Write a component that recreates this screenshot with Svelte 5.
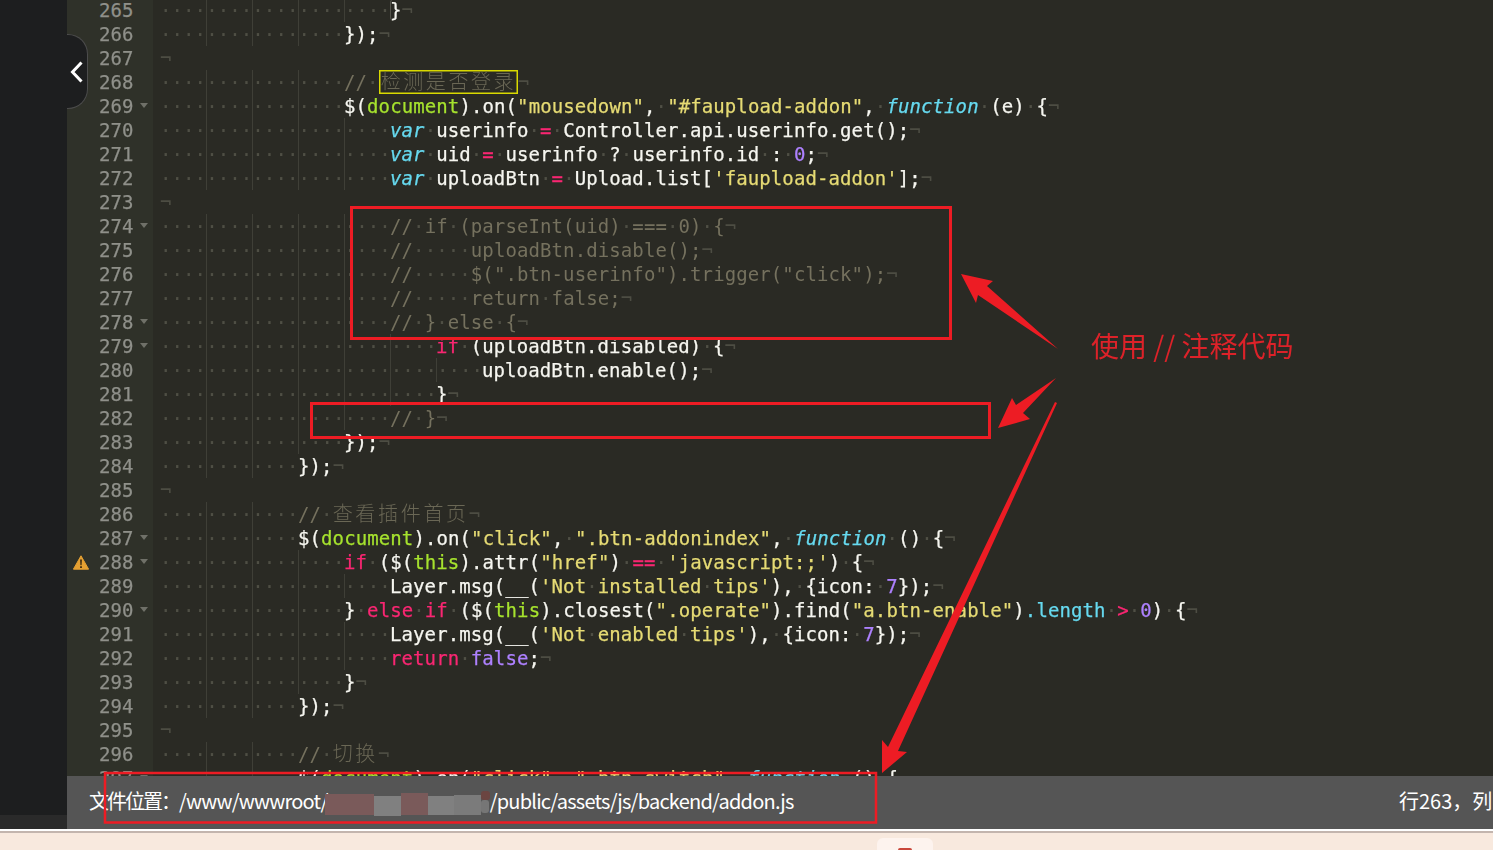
<script>
  const source = [
    [265, 20, '[b:}]'],
    [266, 16, '});'],
    [267, 0, ''],
    [268, 16, '[c://] [y:检测是否登录]'],
    [269, 16, '$([n:document]).on([s:"mousedown"], [s:"#faupload-addon"], [t:function] (e) {', 'fold'],
    [270, 20, '[t:var] userinfo [k:=] Controller.api.userinfo.get();'],
    [271, 20, '[t:var] uid [k:=] userinfo ? userinfo.id : [p:0];'],
    [272, 20, "[t:var] uploadBtn [k:=] Upload.list[[s:'faupload-addon']];"],
    [273, 0, ''],
    [274, 20, '[c://] [c:if] [c:(parseInt(uid)] [c:===] [c:0)] [c:{]', 'fold'],
    [275, 20, '[c://]     [c:uploadBtn.disable();]'],
    [276, 20, '[c://]     [c:$(".btn-userinfo").trigger("click");]'],
    [277, 20, '[c://]     [c:return] [c:false;]'],
    [278, 20, '[c://] [c:}] [c:else] [c:{]', 'fold'],
    [279, 24, '[k:if] (uploadBtn.disabled) {', 'fold'],
    [280, 28, 'uploadBtn.enable();'],
    [281, 24, '}'],
    [282, 20, '[c://] [c:}]'],
    [283, 16, '});'],
    [284, 12, '});'],
    [285, 0, ''],
    [286, 12, '[c://] [h:查看插件首页]'],
    [287, 12, '$([n:document]).on([s:"click"], [s:".btn-addonindex"], [t:function] () {', 'fold'],
    [288, 16, "[k:if] ($([n:this]).attr([s:\"href\"]) [k:==] [s:'javascript:;']) {", 'fold', true],
    [289, 20, "Layer.msg(__([s:'Not installed tips']), {icon: [p:7]});"],
    [290, 16, '} [k:else] [k:if] ($([n:this]).closest([s:".operate"]).find([s:"a.btn-enable"])[l:.length] [k:>] [p:0]) {', 'fold'],
    [291, 20, "Layer.msg(__([s:'Not enabled tips']), {icon: [p:7]});"],
    [292, 20, '[k:return] [p:false];'],
    [293, 16, '}'],
    [294, 12, '});'],
    [295, 0, ''],
    [296, 12, '[c://] [h:切换]'],
    [297, 12, '$([n:document]).on([s:"click"], [s:".btn-switch"], [t:function] () {', 'fold']
  ];

  function tokenize(text) {
    const out = [];
    const re = /\[(\w):([^\]]*)\]/g;
    let last = 0;
    let m;
    while ((m = re.exec(text))) {
      if (m.index > last) out.push(['', text.slice(last, m.index)]);
      out.push([m[1], m[2]]);
      last = re.lastIndex;
    }
    if (last < text.length) out.push(['', text.slice(last)]);
    return out.flatMap(([cls, value]) =>
      value.split(/( )/).filter(Boolean).map((piece) =>
        piece === ' ' ? ['dot', '·'] : [cls, piece]
      )
    );
  }

  const lines = source.map(([n, indent, text, fold, warn]) => ({
    n, indent, fold, warn, tokens: tokenize(text), empty: text === ''
  }));
</script>

<div class="shot">
  <div class="window">
    <div class="strip"></div>
    <div class="editor">
      <div class="scroll">
        <div class="code">
          {#each lines as line}
            <div class="row">
              <div class="gutter">
                <span class="warn">
                  {#if line.warn}
                    <svg viewBox="0 0 16 15" width="16" height="15">
                      <path d="M8 .8 15.6 14.2H.4Z" fill="#e5a032" stroke="#e5a032" stroke-linejoin="round"/>
                      <path d="M7.1 4.6h1.8l-.3 5.6H7.4ZM7.1 11.2h1.8v1.8H7.1Z" fill="#3a2a12"/>
                    </svg>
                  {/if}
                </span>
                <span class="num">{line.n}</span>
                <span class="foldslot">{#if line.fold}<i class="fold"></i>{/if}</span>
              </div>
              <div class="text">
                {#if line.indent}<span class="lead" style="width:{line.indent * 11.5}px">{'·'.repeat(line.indent)}</span>{/if}{#each line.tokens as [cls, piece]}<span class={cls}>{piece}</span>{/each}<span class="eol">¬</span>
              </div>
            </div>
          {/each}
        </div>
      </div>
      <div class="bar">
        <span class="path"><span class="label">文件位置：</span>/www/wwwroot/<span class="redact"></span>/public/assets/js/backend/addon.js</span>
        <span class="pos">行263，列1</span>
      </div>
    </div>
  </div>
  <div class="rule"></div>
  <div class="floor"><div class="tab"><i></i></div></div>

  <button class="collapse" aria-label="收起">
    <svg viewBox="0 0 14 22" width="14" height="22">
      <path d="M11.5 1.5 2.5 11l9 9.5" fill="none" stroke="#fff" stroke-width="3"/>
    </svg>
  </button>

  <svg class="marks" viewBox="0 0 1493 850" width="1493" height="850">
    <g class="smear">
      <rect x="325" y="794" width="49" height="21" fill="#7a5a5a"/>
      <rect x="374" y="796" width="27" height="20" fill="#808080"/>
      <rect x="401" y="793" width="27" height="22" fill="#7a5a5a"/>
      <rect x="428" y="796" width="26" height="19" fill="#808080"/>
      <rect x="454" y="795" width="27" height="20" fill="#7b7b7b"/>
      <rect x="481" y="791" width="9" height="9" rx="3" fill="#6b4541"/>
      <rect x="481" y="800" width="8" height="13" rx="3" fill="#767676"/>
    </g>
    <g fill="none" stroke="#ed1c24" stroke-width="3">
      <rect x="351.5" y="207.5" width="599" height="131"/>
      <rect x="311.5" y="403.5" width="678" height="34"/>
      <rect x="105" y="773" width="771" height="49.5" stroke-width="2.5"/>
    </g>
    <g fill="#ed1c24">
      <path d="M961 274 993 281 987 286 1058 349 978 295 976 303Z"/>
      <path d="M998 428 1012 398 1016 405 1056 378 1023 413 1030 419Z"/>
      <path d="M882 773 882 740 888 747 1055 402 1057 403 898 751 907 752Z"/>
    </g>
  </svg>
  <div class="note">使用 // 注释代码</div>
</div>

<style>
  :global(body) {
    margin: 0;
    background: #f8e9de;
  }

  .shot {
    position: relative;
    width: 1493px;
    height: 850px;
    overflow: hidden;
    display: flex;
    flex-direction: column;
  }

  .window {
    display: flex;
    height: 829px;
    flex: none;
  }

  .strip {
    width: 67px;
    flex: none;
    background: linear-gradient(#1d1e1f 0 815px, #2a2a2a 815px);
  }

  .editor {
    flex: 1;
    min-width: 0;
    display: flex;
    flex-direction: column;
  }

  .scroll {
    height: 776px;
    flex: none;
    overflow: hidden;
    background: #2a2a24;
  }

  .code {
    margin-top: -2px;
    filter: blur(0.35px);
    font: 19px/24px "DejaVu Sans Mono", "Noto Sans CJK SC", monospace;
    letter-spacing: 0.1px;
    color: #f6f6f0;
    -webkit-text-stroke: 0.25px;
  }

  .row {
    display: flex;
    height: 24px;
    white-space: pre;
  }

  .gutter {
    width: 86px;
    flex: none;
    display: flex;
    align-items: center;
    background: #2f3129;
    color: #8f908a;
  }

  .warn {
    width: 32px;
    flex: none;
    display: flex;
    padding-left: 6px;
    box-sizing: border-box;
  }

  .num {
    width: 35px;
    flex: none;
  }

  .foldslot {
    width: 19px;
    flex: none;
    display: flex;
    justify-content: center;
  }

  .fold {
    width: 0;
    height: 0;
    border-left: 4px solid transparent;
    border-right: 4px solid transparent;
    border-top: 5px solid #6f7068;
    margin-top: -2px;
  }

  .text {
    padding-left: 7px;
    flex: 1;
    min-width: 0;
  }

  .lead {
    display: inline-block;
    height: 24px;
    vertical-align: top;
    overflow: hidden;
    color: #4f4f45;
    -webkit-text-stroke: 0;
    background-image:
      linear-gradient(90deg, #2a2a24 0 1px, transparent 1px),
      repeating-linear-gradient(90deg, #3f3f37 0 1px, transparent 1px 46px);
  }

  .dot { color: #4f4f45; -webkit-text-stroke: 0; }
  .eol { color: #4d4d43; -webkit-text-stroke: 0; }
  .c { color: #75715e; -webkit-text-stroke: 0; }
  .k { color: #f92672; }
  .t { color: #66d9ef; font-style: italic; }
  .l { color: #66d9ef; }
  .n { color: #a6e22e; }
  .s { color: #e6db74; }
  .p { color: #ae81ff; }

  .b {
    border-radius: 4px;
    box-shadow: inset 1px 0 0 #55554c;
  }

  .y,
  .h {
    display: inline-block;
    height: 24px;
    vertical-align: top;
    font-family: "Noto Sans CJK SC", sans-serif;
    font-size: 20px;
    line-height: 22px;
    font-weight: 300;
    letter-spacing: 2.7px;
    color: #6a6755;
    -webkit-text-stroke: 0;
  }

  .y {
    width: 139px;
    padding-left: 2px;
    box-sizing: border-box;
    letter-spacing: 2.6px;
    box-shadow: inset 0 0 0 1.5px #d9d900;
  }

  .bar {
    flex: 1;
    display: flex;
    align-items: center;
    padding: 0 0 4px 22px;
    background: #555;
    color: #fff;
    overflow: hidden;
    white-space: nowrap;
    font: 20px/26px "Noto Sans CJK SC", sans-serif;
  }

  .path {
    flex: 0 0 1310px;
    letter-spacing: -0.78px;
  }

  .label {
    letter-spacing: -2px;
  }

  .redact {
    display: inline-block;
    width: 162px;
  }

  .pos {
    flex: none;
  }

  .rule {
    height: 4px;
    flex: none;
    background: linear-gradient(#fff 0 2px, #c3b5ae 2px);
  }

  .floor {
    flex: 1;
    background: #f8e9de;
    display: flex;
    align-items: flex-end;
    padding-left: 877px;
  }

  .tab {
    width: 56px;
    height: 12px;
    background: #fdf3ee;
    border-radius: 6px 6px 0 0;
    display: flex;
    justify-content: center;
    align-items: flex-end;
  }

  .tab i {
    width: 14px;
    height: 2px;
    background: #c9463a;
    border-radius: 7px 7px 0 0;
  }

  .collapse {
    position: absolute;
    left: 67px;
    top: 34px;
    width: 21px;
    height: 75px;
    padding: 0 0 0 3px;
    box-sizing: border-box;
    background: #1d1e1f;
    border: 1px solid #4c4c4c;
    border-left: 0;
    border-radius: 0 20px 20px 0;
    display: flex;
    align-items: center;
  }

  .marks {
    position: absolute;
    left: 0;
    top: 0;
    pointer-events: none;
  }

  .smear {
    filter: blur(0.6px);
  }

  .note {
    position: absolute;
    left: 1091px;
    top: 325px;
    color: #dc2229;
    font: 400 28px/40px "Noto Sans CJK SC", sans-serif;
    white-space: nowrap;
  }
</style>
